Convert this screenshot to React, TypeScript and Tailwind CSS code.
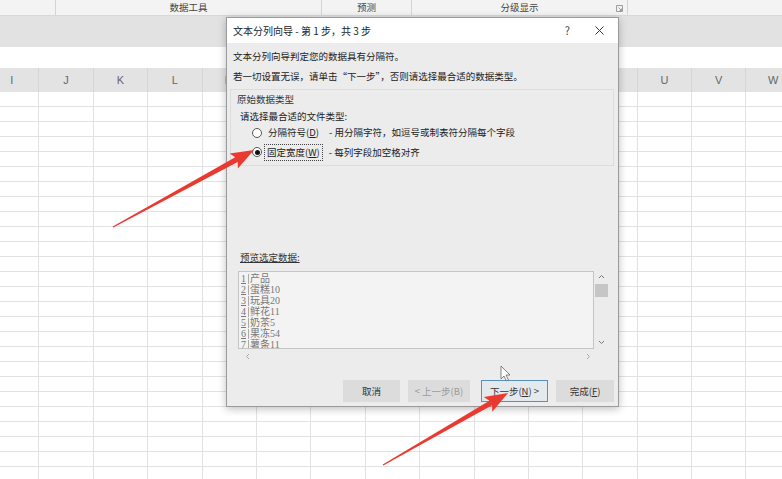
import React from 'react'

const COLS = ['I', 'J', 'K', 'L', 'M', 'N', 'O', 'P', 'Q', 'R', 'S', 'T', 'U', 'V', 'W']
const ROWS = Array.from({ length: 26 }, (_, i) => i)

const PREVIEW = ['产品', '蛋糕10', '玩具20', '鲜花11', '奶茶5', '果冻54', '薯条11']

type Pt = [number, number]

function arrowPoints(tail: Pt, tip: Pt, headLen = 20, headW = 8.5, neck = 2.6, tailW = 0.6) {
  const dx = tip[0] - tail[0]
  const dy = tip[1] - tail[1]
  const len = Math.hypot(dx, dy)
  const ux = dx / len
  const uy = dy / len
  const nx = -uy
  const ny = ux
  const bx = tip[0] - ux * headLen
  const by = tip[1] - uy * headLen
  const pts: Pt[] = [
    [tail[0] + nx * tailW, tail[1] + ny * tailW],
    [bx + nx * neck, by + ny * neck],
    [bx - ux * 3 + nx * headW, by - uy * 3 + ny * headW],
    tip,
    [bx - ux * 3 - nx * headW, by - uy * 3 - ny * headW],
    [bx - nx * neck, by - ny * neck],
    [tail[0] - nx * tailW, tail[1] - ny * tailW],
  ]
  return pts.map(p => p.map(v => v.toFixed(1)).join(',')).join(' ')
}

function Radio({ checked }: { checked?: boolean }) {
  return (
    <span className="flex h-[10px] w-[10px] shrink-0 items-center justify-center rounded-full border border-[#555] bg-white">
      {checked && <span className="h-[5px] w-[5px] rounded-full bg-[#111]" />}
    </span>
  )
}

function Dialog() {
  return (
    <div className="absolute left-[226px] top-[17px] flex h-[390px] w-[393px] flex-col whitespace-nowrap border border-[#9a9a9a] bg-[#ececec] text-[9.5px] text-[#222] shadow-[0_2px_8px_rgba(0,0,0,0.25)]">
      <div className="flex h-[25px] items-center bg-white pl-[6px] text-[10px] leading-none">
        <span>文本分列向导 - 第 1 步，共 3 步</span>
        <span className="ml-auto mr-[25px] text-[11px] text-[#444]">?</span>
        <svg width="9" height="9" viewBox="0 0 9 9" className="mr-[14px]">
          <path d="M0.5 0.5L8.5 8.5M8.5 0.5L0.5 8.5" stroke="#333" strokeWidth="1" />
        </svg>
      </div>

      <div className="pl-[6px] pt-[6px] leading-[14px]">文本分列向导判定您的数据具有分隔符。</div>
      <div className="mt-[6px] pl-[6px] leading-[14px]">若一切设置无误，请单击“下一步”，否则请选择最合适的数据类型。</div>

      <div className="ml-[3px] mr-[4px] mt-[6px] border border-[#dddddd] pb-[4px] pt-[2px]">
        <div className="pl-[6px] leading-[14px] text-[#333]">原始数据类型</div>
        <div className="mt-[3px] pl-[9px] leading-[14px]">请选择最合适的文件类型:</div>
        <div className="mt-[1px] flex h-[17px] items-center pl-[21px]">
          <Radio />
          <span className="ml-[4px] w-[63px] px-[2px]">分隔符号(<span className="underline">D</span>)</span>
          <span>- 用分隔字符，如逗号或制表符分隔每个字段</span>
        </div>
        <div className="mt-[2px] flex h-[18px] items-center pl-[21px]">
          <Radio checked />
          <span className="ml-[2px] mr-[6px] border border-dotted border-[#444] px-[2px] leading-[15px]">固定宽度(<span className="underline">W</span>)</span>
          <span>- 每列字段加空格对齐</span>
        </div>
      </div>

      <div className="mt-[84px] pl-[13px] leading-[14px] text-[#333] underline">预览选定数据:</div>

      <div className="ml-[11px] mt-[7px] flex h-[78px] w-[370px]">
        <div className="h-full w-[356px] overflow-hidden border border-[#c4c4c4] bg-[#f3f3f3] pt-px font-['Liberation_Serif','Noto_Sans_CJK_SC',serif] text-[10px] text-[#777]">
          {PREVIEW.map((t, i) => (
            <div key={i} className="flex h-[11px] items-center leading-none">
              <span className="w-[10px] border-r border-[#aaa] pl-[2px] underline">{i + 1}</span>
              <span className="pl-[1px]">{t}</span>
            </div>
          ))}
        </div>
        <div className="flex w-[14px] flex-col items-center pt-[3px] text-[#777]">
          <svg width="7" height="5" viewBox="0 0 7 5"><path d="M1 4L3.5 1.5L6 4" stroke="#777" fill="none" /></svg>
          <div className="mt-[5px] h-[13px] w-[13px] bg-[#c6c6c6]" />
          <svg width="7" height="5" viewBox="0 0 7 5" className="mt-auto mb-[4px]"><path d="M1 1L3.5 3.5L6 1" stroke="#777" fill="none" /></svg>
        </div>
      </div>
      <div className="ml-[18px] flex h-[14px] w-[346px] items-center justify-between">
        <svg width="5" height="7" viewBox="0 0 5 7"><path d="M4 1L1.5 3.5L4 6" stroke="#aaa" fill="none" /></svg>
        <svg width="5" height="7" viewBox="0 0 5 7"><path d="M1 1L3.5 3.5L1 6" stroke="#aaa" fill="none" /></svg>
      </div>

      <div className="mt-[17px] flex h-[22px] items-stretch">
        <button className="ml-[116px] w-[57px] bg-[#dcdcdc] text-[#333]">取消</button>
        <button className="ml-[8px] w-[62px] bg-[#dcdcdc] text-[#9a9a9a]">&lt; 上一步(B)</button>
        <button className="ml-[11px] w-[67px] border border-[#5a8fc0] bg-[#e4e9ee] text-[#333]">下一步(<span className="underline">N</span>) &gt;</button>
        <button className="ml-[8px] w-[58px] bg-[#dcdcdc] text-[#333]">完成(<span className="underline">F</span>)</button>
      </div>
    </div>
  )
}

export default function App() {
  return (
    <div className="relative h-[479px] w-[782px] overflow-hidden bg-white font-['Noto_Sans_CJK_SC','Liberation_Sans',sans-serif]">
      <div className="flex h-[16px] border-b border-[#d8d8d8] bg-[#f3f3f3] text-[9.5px] leading-[15px] text-[#444]">
        <div className="w-[56px] border-r border-[#d4d4d4]" />
        <div className="w-[266px] border-r border-[#d4d4d4] text-center">数据工具</div>
        <div className="w-[90px] border-r border-[#d4d4d4] text-center">预测</div>
        <div className="relative w-[216px] border-r border-[#d4d4d4] text-center">
          分级显示
          <svg width="7" height="7" viewBox="0 0 7 7" className="absolute right-[4px] top-[5px]">
            <path d="M0.5 0.5H6.5V6.5H0.5Z M2.5 2.5L5.5 5.5 M3.5 5.5H5.5V3.5" stroke="#888" fill="none" strokeWidth="0.8" />
          </svg>
        </div>
        <div className="flex-1" />
      </div>
      <div className="h-[31px] bg-[#e2e2e2]" />
      <div className="h-[21px] bg-white" />

      <div className="-ml-[15px] flex">
        {COLS.map(c => (
          <div key={c} className="w-[54.4px] shrink-0">
            <div className="flex h-[24px] items-center justify-center border-r border-[#d6d6d6] bg-[#e3e3e3] font-['Liberation_Sans',sans-serif] text-[11px] text-[#666]">
              {c}
            </div>
            {ROWS.map(r => (
              <div key={r} className="h-[15px] border-b border-r border-[#e2e2e2]" />
            ))}
          </div>
        ))}
      </div>

      <Dialog />

      <svg className="pointer-events-none absolute left-0 top-0" width="782" height="479">
        <polygon points={arrowPoints([113, 227], [254, 150])} fill="#ea3a30" />
        <polygon points={arrowPoints([383, 465], [508, 393])} fill="#ea3a30" />
        <path d="M501 366L501 379L504 376L506.5 381L508.5 380L506 375L510 375Z" fill="#fff" stroke="#555" strokeWidth="0.7" />
      </svg>
    </div>
  )
}
